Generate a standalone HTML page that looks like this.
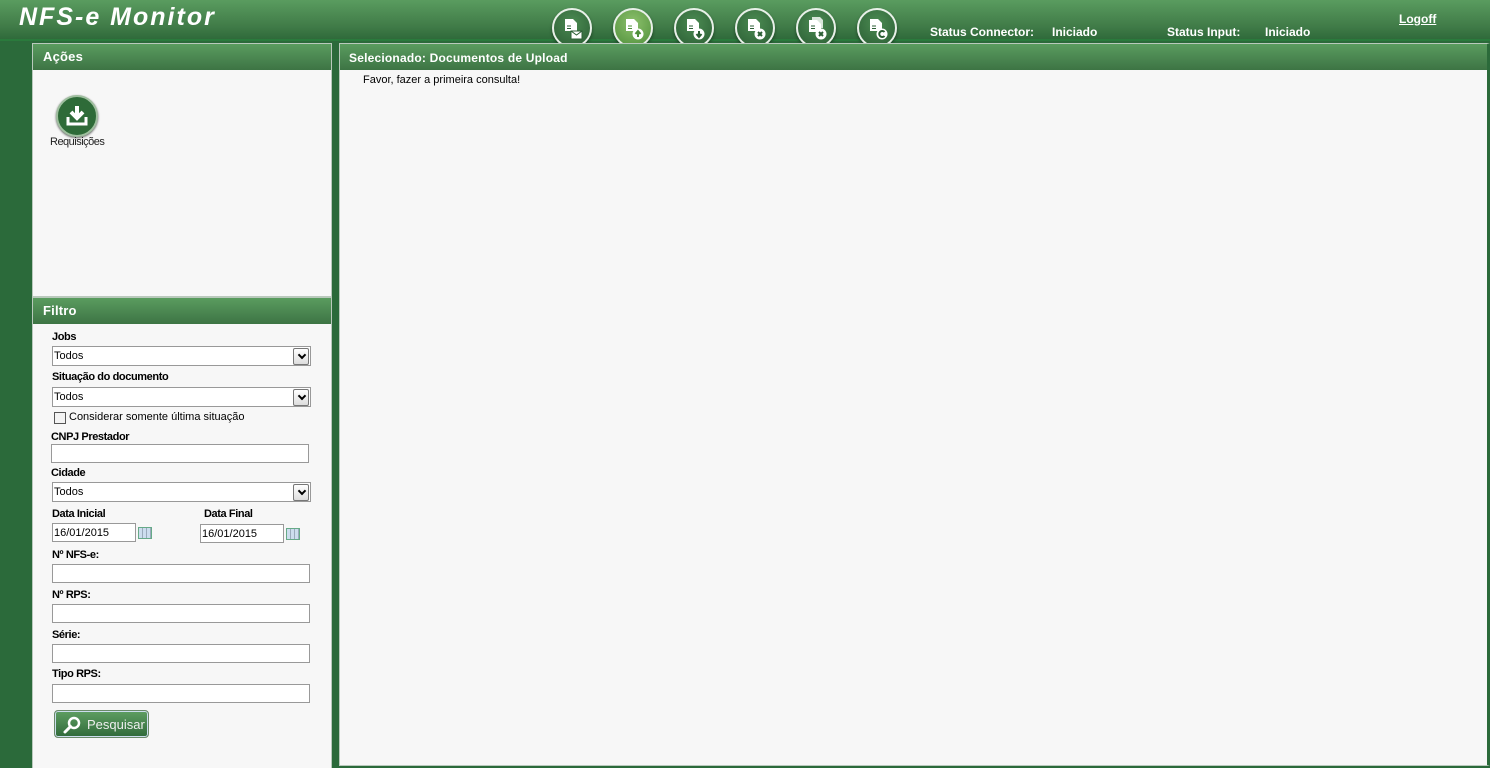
<!DOCTYPE html>
<html style="overflow:hidden;height:768px"><head><meta charset="utf-8"><style>
*{margin:0;padding:0;box-sizing:border-box}
body{width:1490px;height:768px;overflow:hidden;background:#2b6a3a;font-family:"Liberation Sans",sans-serif;position:relative}
.top{position:absolute;left:0;top:0;width:1490px;height:41px;background:linear-gradient(#5a9c5f,#3f7a47 70%,#2f6a3a);border-bottom:2px solid #2a7a3c}
.logo{position:absolute;left:19px;top:3px;color:#fff;font:italic bold 25px "Liberation Sans",sans-serif;letter-spacing:2px}
.st{position:absolute;top:25px;color:#fff;font:bold 12px "Liberation Sans",sans-serif}
.logoff{position:absolute;left:1399px;top:12px;color:#fff;font:bold 12px "Liberation Sans";text-decoration:underline}
.ic{position:absolute;top:8px;width:40px;height:40px;border-radius:50%;background:radial-gradient(circle at 50% 35%,#4b8a52,#2b5e34);border:2px solid #e8f0e8;box-shadow:0 2px 3px rgba(0,0,0,.4)}
.ic.act{background:radial-gradient(circle at 50% 35%,#8cc06c,#4f8f3a)}
.ic svg{position:absolute;left:6px;top:6px}
.panel{position:absolute;background:#f7f7f7;border:1px solid #b9c9bc;overflow:hidden}
.ph{position:absolute;left:0;top:0;right:0;height:26px;background:linear-gradient(#5a9c5f,#3d7444);color:#fff;font:bold 13px "Liberation Sans";padding:5px 0 0 10px;letter-spacing:.2px}
.lb{position:absolute;font:bold 11px "Liberation Sans";color:#000;letter-spacing:-.4px}
.in{position:absolute;height:19px;background:#fff;border:1px solid #999;font:11px "Liberation Sans";padding:3px 1px;color:#000}
.sel:after{content:"";position:absolute;right:1px;top:1px;width:14px;height:15px;border:1px solid #777;border-radius:2px;background:linear-gradient(#fff,#ddd)}
.sel:before{content:"";position:absolute;right:5px;top:5px;width:4px;height:4px;border-right:2px solid #000;border-bottom:2px solid #000;transform:rotate(45deg);z-index:2}
.cal{position:absolute;width:14px;height:12px;border:1px solid #6a8;background:repeating-linear-gradient(90deg,#cde 0 3px,#9ab 3px 4px);}
</style></head><body>
<div class="top">
<div class="logo">NFS-e Monitor</div>
<div class="st" style="left:930px">Status Connector:</div>
<div class="st" style="left:1052px">Iniciado</div>
<div class="st" style="left:1167px">Status Input:</div>
<div class="st" style="left:1265px">Iniciado</div>
<div class="logoff">Logoff</div>
</div>
<div class="ic" style="left:552px"><svg width="26" height="26" viewBox="0 0 26 26" fill="#fff"><path d="M5 3h8l4 4v8H5z"/><path d="M7 10h4M7 12.5h4" stroke="#2b5e34"/><rect x="11" y="15" width="11" height="8" stroke="#2b5e34" stroke-width="1"/><path d="M11 15l5.5 4 5.5-4" stroke="#2b5e34" fill="none"/></svg></div>
<div class="ic act" style="left:613px"><svg width="26" height="26" viewBox="0 0 26 26" fill="#fff"><path d="M5 3h8l4 4v8H5z"/><path d="M7 10h4M7 12.5h4" stroke="#4f8f3a"/><circle cx="17" cy="18" r="5.5"/><path d="M17 21v-5M14.5 18l2.5-3 2.5 3" stroke="#4f8f3a" stroke-width="2" fill="none"/></svg></div>
<div class="ic" style="left:674px"><svg width="26" height="26" viewBox="0 0 26 26" fill="#fff"><path d="M5 3h8l4 4v8H5z"/><path d="M7 10h4M7 12.5h4" stroke="#2b5e34"/><circle cx="17" cy="18" r="5.5"/><path d="M17 15v5M14.5 18l2.5 3 2.5-3" stroke="#2b5e34" stroke-width="2" fill="none"/></svg></div>
<div class="ic" style="left:735px"><svg width="26" height="26" viewBox="0 0 26 26" fill="#fff"><path d="M5 3h8l4 4v8H5z"/><path d="M7 10h4M7 12.5h4" stroke="#2b5e34"/><circle cx="17" cy="18" r="5.5"/><path d="M15 16l4 4M19 16l-4 4" stroke="#2b5e34" stroke-width="2"/></svg></div>
<div class="ic" style="left:796px"><svg width="26" height="26" viewBox="0 0 26 26" fill="#fff"><path d="M8 1h8l3 3v8H8z" opacity=".8"/><path d="M5 4h8l4 4v8H5z"/><path d="M7 10h4M7 12.5h4" stroke="#2b5e34"/><circle cx="17" cy="18" r="5.5"/><path d="M15 16l4 4M19 16l-4 4" stroke="#2b5e34" stroke-width="2"/></svg></div>
<div class="ic" style="left:857px"><svg width="26" height="26" viewBox="0 0 26 26" fill="#fff"><path d="M5 3h8l4 4v8H5z"/><path d="M7 10h4M7 12.5h4" stroke="#2b5e34"/><circle cx="17" cy="18" r="5.5"/><path d="M19.5 16a3 3 0 1 0 0 4" stroke="#2b5e34" stroke-width="2" fill="none"/></svg></div>

<div class="panel" style="left:32px;top:43px;width:300px;height:254px">
<div class="ph">Ações</div>
<div style="position:absolute;left:23px;top:51px;width:42px;height:42px;border-radius:50%;background:#2e6b38;border:2px solid #9fbf9f;box-shadow:0 1px 2px #555"><svg width="38" height="38" viewBox="0 0 38 38"><path d="M19 9v12M13 15l6 6 6-6" stroke="#fff" stroke-width="4" fill="none"/><path d="M10 20v7h18v-7" stroke="#fff" stroke-width="3" fill="none"/></svg></div>
<div style="position:absolute;left:17px;top:92px;font:11px 'Liberation Sans';color:#222;letter-spacing:-.5px">Requisições</div>
</div>

<div class="panel" style="left:32px;top:297px;width:300px;height:471px;border-bottom:none">
<div class="ph">Filtro</div>
<div class="lb" style="left:19px;top:33px">Jobs</div>
<div class="in sel" style="left:19px;top:48px;width:259px;height:20px">Todos</div>
<div class="lb" style="left:19px;top:73px">Situação do documento</div>
<div class="in sel" style="left:19px;top:89px;width:259px;height:20px">Todos</div>
<div style="position:absolute;left:21px;top:114px;width:12px;height:12px;border:1px solid #555;background:#f3f3f3"></div>
<div style="position:absolute;left:36px;top:113px;font:11px 'Liberation Sans';color:#000">Considerar somente última situação</div>
<div class="lb" style="left:18px;top:133px">CNPJ Prestador</div>
<div class="in" style="left:18px;top:146px;width:258px">&nbsp;</div>
<div class="lb" style="left:18px;top:169px">Cidade</div>
<div class="in sel" style="left:19px;top:184px;width:259px;height:20px">Todos</div>
<div class="lb" style="left:19px;top:210px">Data Inicial</div>
<div class="lb" style="left:171px;top:210px">Data Final</div>
<div class="in" style="left:19px;top:225px;width:84px">16/01/2015</div>
<div class="cal" style="left:105px;top:229px"></div>
<div class="in" style="left:167px;top:226px;width:84px">16/01/2015</div>
<div class="cal" style="left:253px;top:230px"></div>
<div class="lb" style="left:19px;top:251px">Nº NFS-e:</div>
<div class="in" style="left:19px;top:266px;width:258px">&nbsp;</div>
<div class="lb" style="left:19px;top:291px">Nº RPS:</div>
<div class="in" style="left:19px;top:306px;width:258px">&nbsp;</div>
<div class="lb" style="left:19px;top:331px">Série:</div>
<div class="in" style="left:19px;top:346px;width:258px">&nbsp;</div>
<div class="lb" style="left:19px;top:370px">Tipo RPS:</div>
<div class="in" style="left:19px;top:386px;width:258px">&nbsp;</div>
<div style="position:absolute;left:21px;top:412px;width:95px;height:28px;border-radius:4px;border:1px solid #6a8a6a;background:linear-gradient(#5e9e62,#306a3a);box-shadow:inset 0 0 0 1px #cde">
<svg style="position:absolute;left:7px;top:4px" width="20" height="20" viewBox="0 0 20 20"><circle cx="12" cy="8" r="5" stroke="#fff" stroke-width="2.5" fill="none"/><path d="M8.5 11.5L3 17" stroke="#fff" stroke-width="3" stroke-linecap="round"/></svg>
<span style="position:absolute;left:32px;top:6px;color:#eee;font:13px 'Liberation Sans'">Pesquisar</span></div>
</div>

<div class="panel" style="left:339px;top:43px;width:1151px;height:723px;border-right:3px solid #2b6a3a">
<div class="ph" style="font-size:12px;padding:7px 0 0 9px">Selecionado: Documentos de Upload</div>
<div style="position:absolute;left:23px;top:30px;font:11px 'Liberation Sans';color:#000">Favor, fazer a primeira consulta!</div>
</div>
</body></html>
